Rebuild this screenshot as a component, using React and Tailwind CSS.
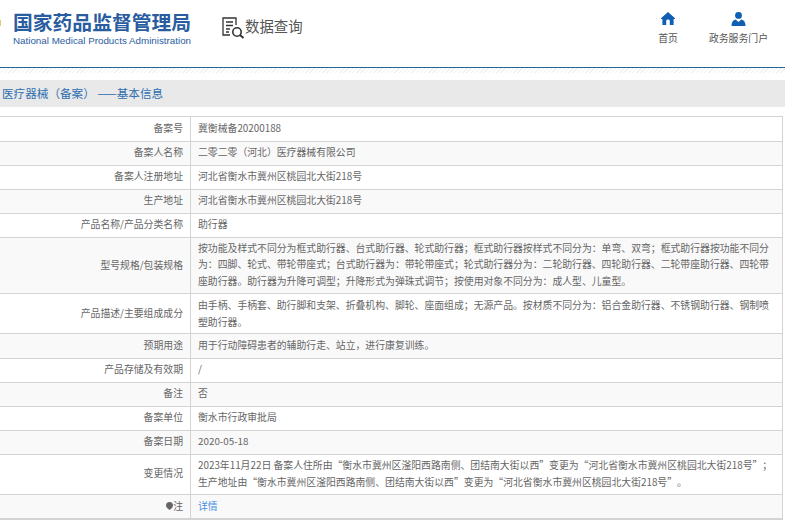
const rows = [
  { label: '备案号', value: ['冀衡械备20200188'], h: 'h-[25px]' },
  { label: '备案人名称', value: ['二零二零（河北）医疗器械有限公司'], h: 'h-6' },
  { label: '备案人注册地址', value: ['河北省衡水市冀州区桃园北大街218号'], h: 'h-6' },
  { label: '生产地址', value: ['河北省衡水市冀州区桃园北大街218号'], h: 'h-6' },
  { label: '产品名称/产品分类名称', value: ['助行器'], h: 'h-6' },
  {
    label: '型号规格/包装规格',
    value: [
      '按功能及样式不同分为框式助行器、台式助行器、轮式助行器；框式助行器按样式不同分为：单弯、双弯；框式助行器按功能不同分',
      '为：四脚、轮式、带轮带座式；台式助行器为：带轮带座式；轮式助行器分为：二轮助行器、四轮助行器、二轮带座助行器、四轮带',
      '座助行器。助行器为升降可调型；升降形式为弹珠式调节；按使用对象不同分为：成人型、儿童型。',
    ],
    h: 'h-14',
    labelPad: 'pb-0',
  },
  {
    label: '产品描述/主要组成成分',
    value: [
      '由手柄、手柄套、助行脚和支架、折叠机构、脚轮、座面组成；无源产品。按材质不同分为：铝合金助行器、不锈钢助行器、钢制喷',
      '塑助行器。',
    ],
    h: 'h-10',
    labelPad: 'pb-0',
    valuePad: 'pb-0',
  },
  { label: '预期用途', value: ['用于行动障碍患者的辅助行走、站立，进行康复训练。'], h: 'h-[25px]' },
  { label: '产品存储及有效期', value: ['/'], h: 'h-6' },
  { label: '备注', value: ['否'], h: 'h-6' },
  { label: '备案单位', value: ['衡水市行政审批局'], h: 'h-6' },
  { label: '备案日期', value: ['2020-05-18'], h: 'h-6' },
  {
    label: '变更情况',
    value: [
      '2023年11月22日 备案人住所由“衡水市冀州区滏阳西路南侧、团结南大街以西”变更为“河北省衡水市冀州区桃园北大街218号”；',
      '生产地址由“衡水市冀州区滏阳西路南侧、团结南大街以西”变更为“河北省衡水市冀州区桃园北大街218号”。',
    ],
    h: 'h-10',
  },
]

function HomeIcon() {
  return (
    <svg width="14" height="13" viewBox="0 0 14 13" fill="#0f5fb5">
      <path d="M7 0 L14 6.2 L14 7 L12.6 7 L12.6 13 L8.8 13 L8.8 9 Q8.8 7.6 7 7.6 Q5.2 7.6 5.2 9 L5.2 13 L1.4 13 L1.4 7 L0 7 L0 6.2 Z" />
    </svg>
  )
}

function UserIcon() {
  return (
    <svg width="15" height="14" viewBox="0 0 15 14" fill="#0f5fb5">
      <circle cx="7.5" cy="3.4" r="3.4" />
      <path d="M0.5 14 Q0.5 8.6 4.6 7.6 L7.5 10 L10.4 7.6 Q14.5 8.6 14.5 14 Z" />
    </svg>
  )
}

function SearchDocIcon() {
  return (
    <svg width="23" height="22" viewBox="0 0 23 22" fill="none" stroke="#333" strokeWidth="1.3">
      <path d="M14 8 L14 1 L1 1 L1 18 L8 18" />
      <path d="M4 5 H11 M4 8.5 H11 M4 12 H8 M4 15 H7" />
      <circle cx="15" cy="15" r="4.2" strokeWidth="1.6" />
      <path d="M18 18 L21.5 21" strokeWidth="2" />
    </svg>
  )
}

function Row({ children, h, even, last, labelPad = 'pb-[2px]', valuePad = 'pb-[2px]' }) {
  return (
    <div className={`flex ${h} ${even ? 'bg-[#f9f9f9]' : 'bg-white'} ${last ? 'border-b-2' : 'border-b'} border-[#d4d4d4]`}>
      <div className={`w-[191px] shrink-0 flex items-center justify-end pr-[7px] ${labelPad} border-r border-[#d4d4d4]`}>{children[0]}</div>
      <div className={`flex-1 flex flex-col justify-center pl-[7px] ${valuePad} text-[#666] leading-[16.6px]`}>{children[1]}</div>
    </div>
  )
}

export default function App() {
  return (
    <div className="w-[785px] h-[526px] overflow-hidden bg-white text-[9.85px] text-[#666] [text-spacing-trim:space-all] font-['Noto_Sans_CJK_SC','Liberation_Sans',sans-serif]">
      <header className="h-[67px] flex relative">
        <div className="absolute left-0 top-[20px] w-[1px] h-[6px] bg-[#e6c47a]" />
        <div className="pl-[13px] pt-[12px] w-[222px]">
          <div className="text-[19.8px] leading-[20px] font-bold text-[#2a5d9f] whitespace-nowrap">国家药品监督管理局</div>
          <div className="text-[9.8px] leading-[12px] mt-[3px] text-[#2a5d9f] whitespace-nowrap font-['Liberation_Sans',sans-serif]">National Medical Products Administration</div>
        </div>
        <div className="flex items-start pt-[17px]">
          <SearchDocIcon />
          <span className="text-[14.4px] leading-[20px] -mt-px text-[#555]">数据查询</span>
        </div>
        <nav className="ml-auto flex pt-[12px] pr-[17px] gap-[31px] text-[#555]">
          <div className="flex flex-col items-center gap-[7px]">
            <HomeIcon />
            <span className="leading-[13px]">首页</span>
          </div>
          <div className="flex flex-col items-center gap-[6px]">
            <UserIcon />
            <span className="leading-[13px]">政务服务门户</span>
          </div>
        </nav>
      </header>
      <div className="h-[1px] bg-[#1f6a94]" />
      <div className="h-[5px] bg-[repeating-linear-gradient(135deg,#f0f0f0_0,#f0f0f0_1px,#ffffff_1px,#ffffff_3px)]" />
      <div className="h-[27px] mt-[7px] bg-[#e9e9e9] flex items-center pl-[2px] text-[11.6px] text-[#2f6fb0] whitespace-nowrap">
        医疗器械（备案） ——基本信息
      </div>
      <div className="mt-[9px] w-[783px] border-t border-r border-[#d4d4d4]">
        {rows.map((r, i) => (
          <Row key={r.label} h={r.h} even={i % 2 === 1} labelPad={r.labelPad} valuePad={r.valuePad}>
            <span>{r.label}</span>
            <>
              {r.value.map((line) => (
                <div key={line} className="whitespace-nowrap">{line}</div>
              ))}
            </>
          </Row>
        ))}
        <Row h="h-[25px]" even last labelPad="pb-0" valuePad="pb-0">
          <span className="flex items-center">
            <svg width="7" height="8" viewBox="0 0 7 8" fill="#666"><path d="M3.5 0 A3.5 3.5 0 0 1 7 3.5 Q7 5.5 3.5 8 Q0 5.5 0 3.5 A3.5 3.5 0 0 1 3.5 0 Z" /></svg>
            注
          </span>
          <div className="text-[#4a90e2]">详情</div>
        </Row>
      </div>
    </div>
  )
}
